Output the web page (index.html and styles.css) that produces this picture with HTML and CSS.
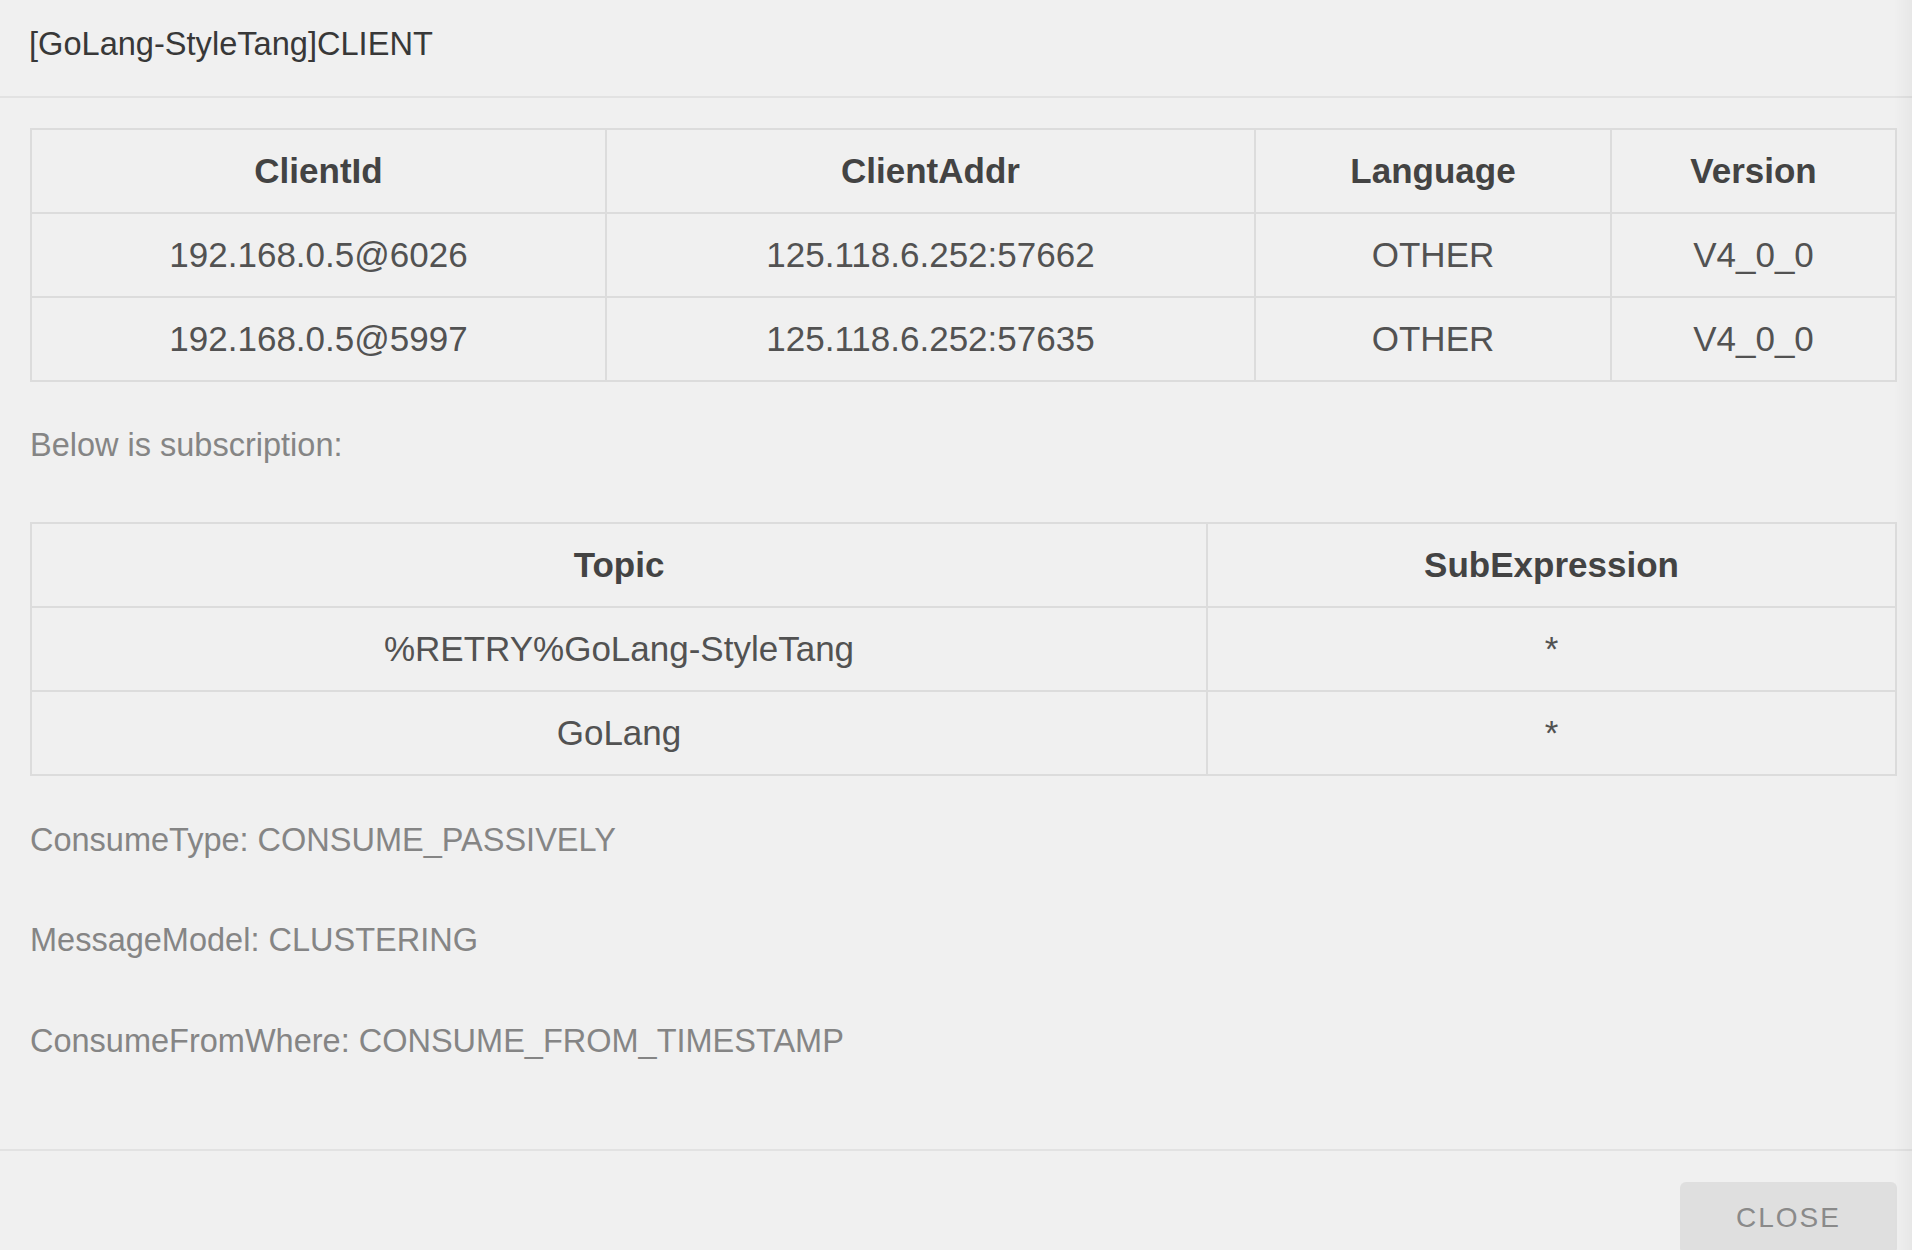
FILE: index.html
```html
<!DOCTYPE html>
<html lang="en">
<head>
<meta charset="utf-8">
<title>[GoLang-StyleTang]CLIENT</title>
<link rel="stylesheet" href="styles.css">
</head>
<body>
<div class="dialog">
  <header class="dialog-header">
    <h2 class="dialog-title">[GoLang-StyleTang]CLIENT</h2>
  </header>
  <main class="dialog-body">
    <table class="grid grid-clients">
      <colgroup>
        <col class="c1"><col class="c2"><col class="c3"><col class="c4">
      </colgroup>
      <thead>
        <tr><th>ClientId</th><th>ClientAddr</th><th>Language</th><th>Version</th></tr>
      </thead>
      <tbody>
        <tr><td>192.168.0.5@6026</td><td>125.118.6.252:57662</td><td>OTHER</td><td>V4_0_0</td></tr>
        <tr><td>192.168.0.5@5997</td><td>125.118.6.252:57635</td><td>OTHER</td><td>V4_0_0</td></tr>
      </tbody>
    </table>
    <p class="note note-sub">Below is subscription:</p>
    <table class="grid grid-subs">
      <colgroup>
        <col class="s1"><col class="s2">
      </colgroup>
      <thead>
        <tr><th>Topic</th><th>SubExpression</th></tr>
      </thead>
      <tbody>
        <tr><td>%RETRY%GoLang-StyleTang</td><td>*</td></tr>
        <tr><td>GoLang</td><td>*</td></tr>
      </tbody>
    </table>
    <p class="note note-first">ConsumeType: CONSUME_PASSIVELY</p>
    <p class="note">MessageModel: CLUSTERING</p>
    <p class="note">ConsumeFromWhere: CONSUME_FROM_TIMESTAMP</p>
  </main>
  <footer class="dialog-footer">
    <button class="btn-close" type="button">Close</button>
  </footer>
</div>
<div class="edge-shade"></div>
</body>
</html>
```

FILE: styles.css
```css
html, body {
  margin: 0;
  padding: 0;
  height: 100%;
  overflow: hidden;
  background: #f0f0f0;
}

body {
  font-family: "Liberation Sans", Arial, Helvetica, sans-serif;
  color: #444;
}

.dialog {
  display: flex;
  flex-direction: column;
}

.dialog-header {
  box-sizing: border-box;
  height: 98px;
  padding: 25px 0 0 29px;
  border-bottom: 2px solid #e2e2e2;
}

.dialog-title {
  margin: 0;
  font-size: 32.6px;
  font-weight: 400;
  line-height: 1.15;
  color: #383838;
}

.dialog-body {
  padding: 30px 15px 89px 30px;
}

.grid {
  width: 1867px;
  table-layout: fixed;
  border-collapse: separate;
  border-spacing: 0;
  border-top: 2px solid #dcdcdc;
  border-left: 2px solid #dcdcdc;
  font-size: 35px;
  line-height: 1.15;
}

.grid th,
.grid td {
  box-sizing: border-box;
  height: 84px;
  padding: 0 10px;
  text-align: center;
  vertical-align: middle;
  border-right: 2px solid #dcdcdc;
  border-bottom: 2px solid #dcdcdc;
  white-space: nowrap;
}

.grid th {
  font-weight: 700;
  color: #434343;
}

.grid td {
  font-weight: 400;
  color: #525252;
}

.grid-clients .c1 { width: 575px; }
.grid-clients .c2 { width: 649px; }
.grid-clients .c3 { width: 356px; }
.grid-clients .c4 { width: 285px; }

.grid-subs .s1 { width: 1176px; }
.grid-subs .s2 { width: 689px; }

.note {
  margin: 63px 0 0;
  font-size: 32.5px;
  line-height: 1.15;
  color: #858585;
}

.note-sub {
  margin: 45px 0 58px;
}

.note-first {
  margin-top: 45.5px;
}

.dialog-footer {
  display: flex;
  justify-content: flex-end;
  padding: 31px 15px 0 0;
  border-top: 2px solid #e2e2e2;
}

.btn-close {
  box-sizing: border-box;
  width: 217px;
  height: 72px;
  border: 0;
  border-radius: 6px;
  background: #dfdfdf;
  color: #8a8a8a;
  font-family: "Liberation Sans", Arial, Helvetica, sans-serif;
  font-size: 28px;
  letter-spacing: 2px;
  text-transform: uppercase;
  padding: 0;
}

.edge-shade {
  position: fixed;
  top: 0;
  right: 0;
  width: 18px;
  height: 100%;
  background: linear-gradient(to right, rgba(0, 0, 0, 0), rgba(0, 0, 0, 0.035));
  pointer-events: none;
}
```
